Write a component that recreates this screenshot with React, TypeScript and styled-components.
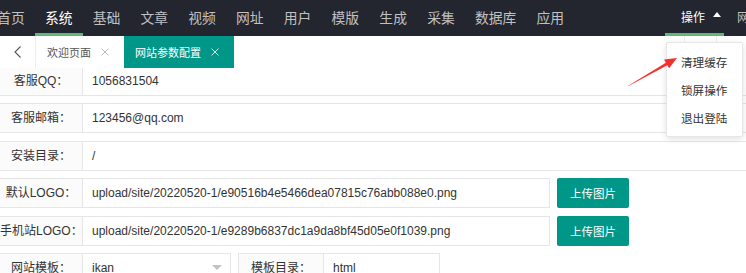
import * as React from 'react';
import styled, { createGlobalStyle, css } from 'styled-components';

const GlobalStyle = createGlobalStyle`
  html, body {
    margin: 0;
    padding: 0;
    background: #fff;
  }
  body {
    font-family: "Liberation Sans", "Noto Sans CJK SC", sans-serif;
    overflow: hidden;
  }
`;

const Page = styled.div`
  position: relative;
  width: 746px;
  height: 273px;
  overflow: hidden;
  background: #fff;
`;

/* ---------- top navigation ---------- */

const TopNav = styled.div`
  display: flex;
  height: 36px;
  background: #23262e;
  font-family: "Noto Sans CJK SC", sans-serif;
`;

const NavList = styled.div`
  display: flex;
  margin-left: -13px;
`;

const NavItem = styled.div<{ $active?: boolean }>`
  position: relative;
  display: flex;
  align-items: center;
  padding: 0 10.1px 3px;
  font-size: 13.8px;
  white-space: nowrap;
  color: ${p => (p.$active ? '#fff' : 'rgba(255,255,255,0.72)')};
  ${p => p.$active && css`
    &::after {
      content: '';
      position: absolute;
      left: 0;
      right: 0;
      bottom: 0;
      height: 3px;
      background: #5fb878;
    }
  `}
`;

const Spacer = styled.div`
  flex: 1;
`;

const NavRight = styled.div`
  display: flex;
  flex: none;
`;

const OpsItem = styled(NavItem)`
  padding: 0 3px 3px 16px;
  font-size: 12px;
  color: #fff;
`;

const CutItem = styled(NavItem)`
  flex: none;
  box-sizing: border-box;
  width: 22px;
  padding: 0 0 3px 13px;
  font-size: 12px;
  overflow: hidden;
`;

const UpCaret = styled.span`
  width: 0;
  height: 0;
  margin: -4px 0 0 8px;
  border-left: 4.5px solid transparent;
  border-right: 4.5px solid transparent;
  border-bottom: 5px solid #fff;
`;

/* ---------- tab bar ---------- */

const TabBar = styled.div`
  position: relative;
  z-index: 1;
  display: flex;
  height: 32px;
  background: #fff;
  font-family: "Noto Sans CJK SC", sans-serif;
`;

const TabArrow = styled.div`
  display: flex;
  align-items: center;
  justify-content: center;
  width: 35px;
  border-right: 1px solid #eee;
`;

const Tab = styled.div<{ $active?: boolean }>`
  display: flex;
  align-items: center;
  gap: 10px;
  padding: 0 15px 0 11px;
  font-size: 11px;
  color: ${p => (p.$active ? '#fff' : '#555')};
  background: ${p => (p.$active ? '#009688' : '#fff')};
  white-space: nowrap;
`;

const TabTools = styled.div`
  display: flex;
  margin-left: auto;
`;

const TabTool = styled.div<{ $w: number }>`
  width: ${p => p.$w}px;
  border-left: 1px solid #eee;
`;

const Close = ({ color }: { color: string }) => (
  <svg width="8" height="8" viewBox="0 0 8 8">
    <path d="M0.5 0.5L7.5 7.5M7.5 0.5L0.5 7.5" stroke={color} strokeWidth="1" />
  </svg>
);

/* ---------- form ---------- */

const Form = styled.div`
  display: flex;
  flex-direction: column;
  gap: 7.5px;
  width: 780px;
  margin: -2.5px 0 0 -1px;
`;

const Row = styled.div`
  display: flex;
  height: 30px;
`;

const Label = styled.div<{ $w?: number }>`
  flex: none;
  box-sizing: border-box;
  width: ${p => p.$w ?? 84}px;
  border: 1px solid #e6e6e6;
  background: #fbfbfb;
  font-size: 12px;
  line-height: 28px;
  text-align: center;
  color: #333;
  white-space: nowrap;
`;

const Field = styled.div<{ $w?: number }>`
  display: flex;
  align-items: center;
  box-sizing: border-box;
  ${p => (p.$w ? css`width: ${p.$w}px; flex: none;` : css`flex: 1;`)}
  border: 1px solid #e6e6e6;
  border-left: 0;
  padding: 0 8px 0 9px;
  font-size: 12px;
  color: #333;
  background: #fff;
  white-space: nowrap;
  overflow: hidden;
`;

const DownCaret = styled.span`
  width: 0;
  height: 0;
  margin: -2px 0 0 auto;
  border-left: 5px solid transparent;
  border-right: 5px solid transparent;
  border-top: 5px solid #c2c2c2;
`;

const UploadButton = styled.div`
  display: flex;
  align-items: center;
  justify-content: center;
  width: 72px;
  margin-left: 7px;
  border-radius: 2px;
  background: #009688;
  color: #fff;
  font-family: "Noto Sans CJK SC", sans-serif;
  font-size: 11.5px;
`;

const Gap = styled.div`
  width: 7px;
  flex: none;
`;

/* ---------- overlay ---------- */

const Dropdown = styled.div`
  position: absolute;
  left: 666px;
  top: 42px;
  z-index: 5;
  box-sizing: border-box;
  width: 77px;
  padding: 5px 0 4px;
  border: 1px solid #e6e6e6;
  border-radius: 2px;
  background: #fff;
  box-shadow: 0 2px 6px rgba(0, 0, 0, 0.12);
  font-family: "Noto Sans CJK SC", sans-serif;
`;

const DropItem = styled.div`
  padding-left: 14px;
  line-height: 28px;
  font-size: 11.6px;
  color: #333;
  white-space: nowrap;
`;

const Pointer = styled.svg`
  position: absolute;
  left: 620px;
  top: 50px;
  z-index: 6;
  pointer-events: none;
`;

const navLeft = ['首页', '系统', '基础', '文章', '视频', '网址', '用户', '模版', '生成', '采集', '数据库', '应用'];

export default function App() {
  return (
    <Page>
      <GlobalStyle />
      <TopNav>
        <NavList>
          {navLeft.map(name => (
            <NavItem key={name} $active={name === '系统'}>{name}</NavItem>
          ))}
        </NavList>
        <Spacer />
        <NavRight>
          <OpsItem $active>
            操作
            <UpCaret />
          </OpsItem>
          <CutItem>网站首页</CutItem>
        </NavRight>
      </TopNav>

      <TabBar>
        <TabArrow>
          <svg width="8" height="12" viewBox="0 0 8 12">
            <path d="M6.5 0.5L1 6L6.5 11.5" fill="none" stroke="#555" strokeWidth="1.1" />
          </svg>
        </TabArrow>
        <Tab>
          欢迎页面
          <Close color="#bbb" />
        </Tab>
        <Tab $active>
          网站参数配置
          <Close color="#cde9e6" />
        </Tab>
        <TabTools>
          <TabTool $w={31} />
          <TabTool $w={29} />
        </TabTools>
      </TabBar>

      <Form>
        <Row>
          <Label>客服QQ：</Label>
          <Field>1056831504</Field>
        </Row>
        <Row>
          <Label>客服邮箱：</Label>
          <Field>123456@qq.com</Field>
        </Row>
        <Row>
          <Label>安装目录：</Label>
          <Field>/</Field>
        </Row>
        <Row>
          <Label>默认LOGO：</Label>
          <Field $w={467}>upload/site/20220520-1/e90516b4e5466dea07815c76abb088e0.png</Field>
          <UploadButton>上传图片</UploadButton>
        </Row>
        <Row>
          <Label>手机站LOGO：</Label>
          <Field $w={467}>upload/site/20220520-1/e9289b6837dc1a9da8bf45d05e0f1039.png</Field>
          <UploadButton>上传图片</UploadButton>
        </Row>
        <Row>
          <Label>网站模板：</Label>
          <Field $w={148}>
            ikan
            <DownCaret />
          </Field>
          <Gap />
          <Label $w={86}>模板目录：</Label>
          <Field $w={116}>html</Field>
        </Row>
      </Form>

      <Dropdown>
        <DropItem>清理缓存</DropItem>
        <DropItem>锁屏操作</DropItem>
        <DropItem>退出登陆</DropItem>
      </Dropdown>

      <Pointer width="64" height="42" viewBox="620 50 64 42">
        <polygon
          points="628,86.3 667.3,65.3 669.1,68.3 677,58 664.1,59.6 665.9,62.7 627.8,85.9"
          fill="#f5302c"
        />
      </Pointer>
    </Page>
  );
}
